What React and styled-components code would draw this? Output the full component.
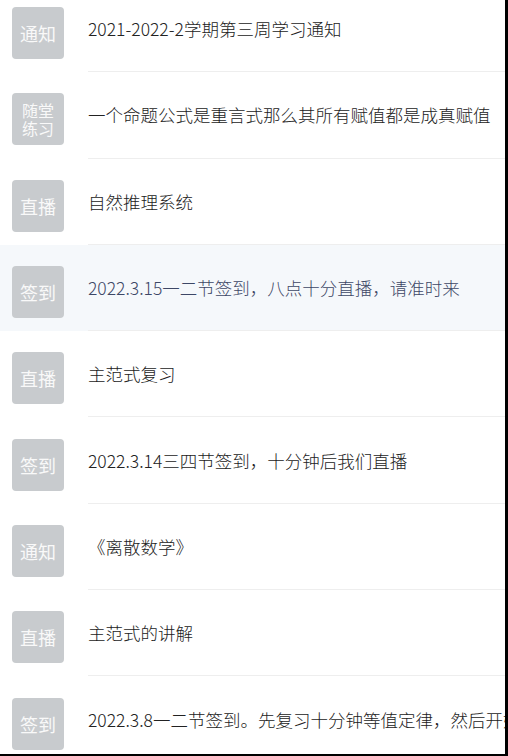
import React from 'react';
import styled, { createGlobalStyle } from 'styled-components';

const GlobalStyle = createGlobalStyle`
  html, body {
    margin: 0;
    padding: 0;
    background: #ffffff;
  }
  body {
    font-family: "Noto Sans CJK SC", "Liberation Sans", sans-serif;
  }
`;

const Frame = styled.div`
  width: 508px;
  height: 756px;
  box-sizing: border-box;
  border-right: 3px solid #000;
  border-bottom: 2px solid #000;
  overflow: hidden;
  background: #fff;
`;

const List = styled.ul`
  list-style: none;
  margin: -14px 0 0;
  padding: 0;
`;

const Row = styled.li`
  display: flex;
  align-items: center;
  height: 86.3px;
  box-sizing: border-box;
  background: ${(p) => (p.$active ? '#f5f8fb' : 'transparent')};
`;

const Badge = styled.div`
  flex: 0 0 52px;
  height: 52px;
  margin: 8px 24px 0 12px;
  border-radius: 4px;
  background: #c8cbce;
  color: #f9f9f9;
  display: flex;
  align-items: center;
  justify-content: center;
  text-align: center;
  font-size: ${(p) => (p.$small ? '16px' : '18px')};
  line-height: ${(p) => (p.$small ? '18px' : '20px')};
  padding: 0 ${(p) => (p.$small ? '9px' : '0')};
  box-sizing: border-box;
  word-break: break-all;
`;

const Body = styled.div`
  flex: 1;
  align-self: stretch;
  display: flex;
  align-items: center;
  min-width: 0;
  border-bottom: 1px solid #eeeeee;
`;

const Title = styled.span`
  font-size: 17.5px;
  font-weight: 300;
  color: ${(p) => (p.$active ? '#3d4766' : '#222222')};
  white-space: nowrap;
  overflow: hidden;
`;

const items = [
  { tag: '通知', text: '2021-2022-2学期第三周学习通知' },
  { tag: '随堂练习', text: '一个命题公式是重言式那么其所有赋值都是成真赋值', small: true },
  { tag: '直播', text: '自然推理系统' },
  { tag: '签到', text: '2022.3.15一二节签到，八点十分直播，请准时来', active: true },
  { tag: '直播', text: '主范式复习' },
  { tag: '签到', text: '2022.3.14三四节签到，十分钟后我们直播' },
  { tag: '通知', text: '《离散数学》' },
  { tag: '直播', text: '主范式的讲解' },
  { tag: '签到', text: '2022.3.8一二节签到。先复习十分钟等值定律，然后开始直播' },
];

export default function App() {
  return (
    <>
      <GlobalStyle />
      <Frame>
        <List>
          {items.map((it, i) => (
            <Row key={i} $active={it.active}>
              <Badge $small={it.small}>{it.tag}</Badge>
              <Body>
                <Title $active={it.active}>{it.text}</Title>
              </Body>
            </Row>
          ))}
        </List>
      </Frame>
    </>
  );
}
